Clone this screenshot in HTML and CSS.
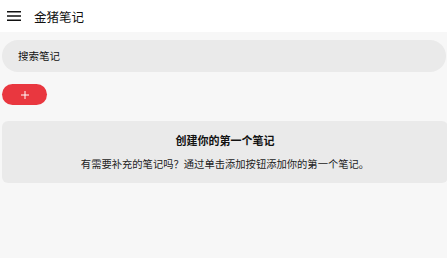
FILE: index.html
```html
<!DOCTYPE html>
<html lang="zh-CN">
<head>
  <meta charset="UTF-8" />
  <meta name="viewport" content="width=device-width, initial-scale=1.0"/>
  <title>金猪笔记</title>
  <link rel="stylesheet" href="styles.css">
</head>
<body>

  <header class="app-bar">
    <button class="menu-btn" aria-label="菜单">
      <svg width="14" height="10" viewBox="0 0 14 10">
        <path d="M0 0.75H14M0 5H14M0 9.25H14" stroke="#111" stroke-width="1.5" fill="none"/>
      </svg>
    </button>
    <h1 class="app-title">金猪笔记</h1>
  </header>

  <main class="content">
    <div class="search-bar">
      <input type="text" class="search-input" placeholder="搜索笔记" />
    </div>

    <button class="add-btn" aria-label="添加">
      <svg width="8" height="8" viewBox="0 0 8 8">
        <path d="M4 0V8M0 4H8" stroke="#fff" stroke-width="1" fill="none"/>
      </svg>
    </button>

    <div class="empty-card">
      <h2>创建你的第一个笔记</h2>
      <p>有需要补充的笔记吗？通过单击添加按钮添加你的第一个笔记。</p>
    </div>
  </main>

</body>
</html>
```

FILE: styles.css
```css
* {
  box-sizing: border-box;
  margin: 0;
  padding: 0;
}

html, body {
  height: 100%;
}

body {
  font-family: "Noto Sans CJK SC", "Noto Sans", sans-serif;
  background-color: #f7f7f7;
  color: #111;
  overflow: hidden;
}

.app-bar {
  display: flex;
  align-items: center;
  height: 32px;
  padding-left: 7px;
  background-color: #fff;
}

.menu-btn {
  display: flex;
  border: none;
  background: none;
  cursor: pointer;
}

.app-title {
  margin-left: 13px;
  font-size: 12.5px;
  font-weight: normal;
  color: #111;
}

.content {
  display: flex;
  flex-direction: column;
  align-items: flex-start;
  padding: 8px 0 0 2px;
}

.search-bar {
  width: 444px;
}

.search-input {
  width: 100%;
  height: 32px;
  border: none;
  border-radius: 16px;
  background-color: #eaeaea;
  padding: 0 0 1px 16px;
  font-family: inherit;
  font-size: 10.5px;
  outline: none;
}

.search-input::placeholder {
  color: #111;
}

.add-btn {
  display: flex;
  align-items: center;
  justify-content: center;
  width: 45px;
  height: 21px;
  margin-top: 12px;
  border: none;
  border-radius: 11px;
  background-color: #e9373f;
  cursor: pointer;
}

.empty-card {
  width: 446px;
  margin-top: 16px;
  padding: 11px 0 11px;
  border-radius: 6px;
  background-color: #eaeaea;
  text-align: center;
}

.empty-card h2 {
  font-size: 11px;
  line-height: 16px;
  font-weight: bold;
}

.empty-card p {
  margin-top: 8px;
  font-size: 10.3px;
  line-height: 16px;
  color: #222;
}
```
